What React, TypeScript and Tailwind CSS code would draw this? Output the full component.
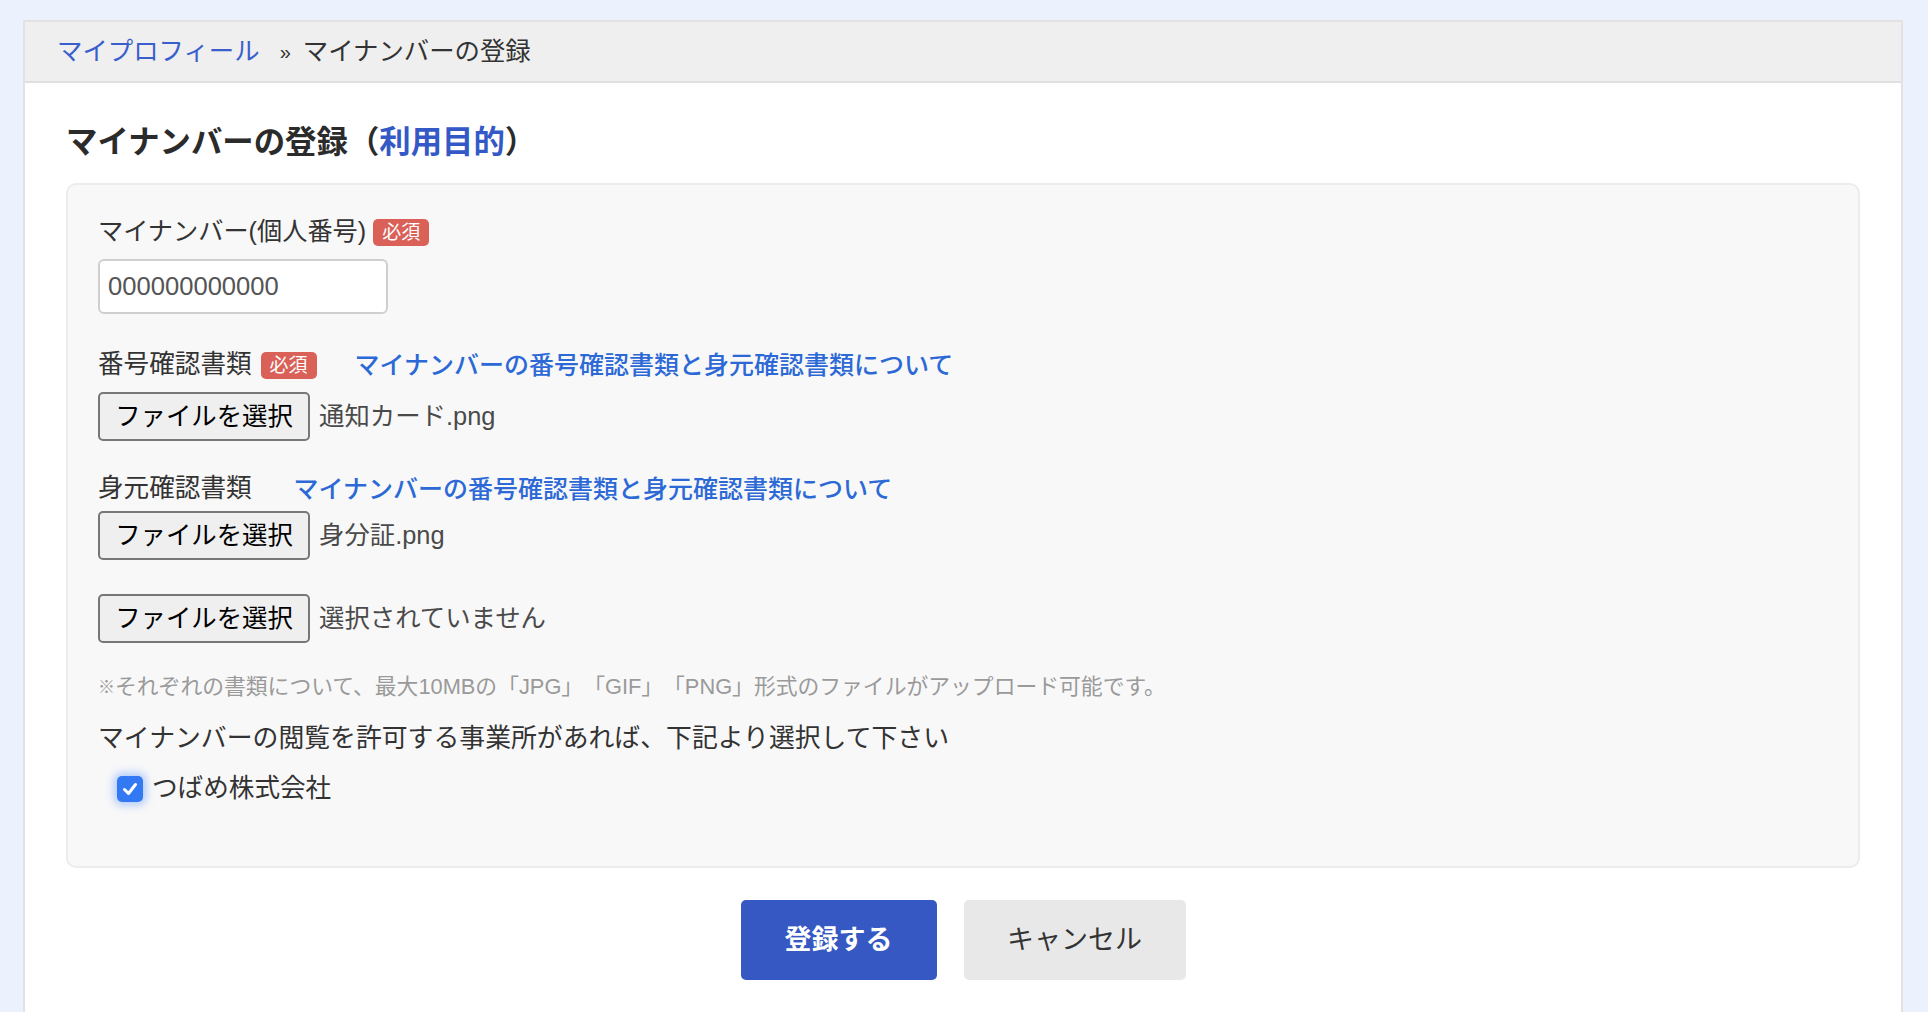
import React from "react";

function Badge() {
  return (
    <span className="inline-flex h-[27px] items-center rounded-[5px] bg-[#da6158] px-[9px] text-[19px] leading-none text-white">
      必須
    </span>
  );
}

function FileRow({ name }: { name: string }) {
  return (
    <div className="flex h-[49px] items-center">
      <span className="flex h-[49px] w-[212px] items-center justify-center rounded-[5px] border-2 border-[#777777] bg-[#efefef] text-[25.4px] leading-none text-black">
        ファイルを選択
      </span>
      <span className="ml-[9px] text-[25.4px] leading-none text-[#4a4a4a]">{name}</span>
    </div>
  );
}

export default function App() {
  return (
    <div className="min-h-[1012px] w-full bg-[#ebf2fd] pt-[20px] font-['Liberation_Sans','Noto_Sans_CJK_JP',sans-serif] text-[#333333] [text-spacing-trim:space-all]">
      <div className="ml-[23px] w-[1880px] min-h-[992px] border-x-2 border-t-2 border-[#e2e2e2] bg-white">
        {/* header */}
        <div className="flex h-[61px] items-center border-b-2 border-[#e0e0e0] bg-[#efefef] pl-[32px] text-[25.4px] leading-none">
          <span className="text-[#3a5fcd]">マイプロフィール</span>
          <span className="ml-[20px] text-[20px] text-[#333]">»</span>
          <span className="ml-[12px] text-[#333]">マイナンバーの登録</span>
        </div>

        {/* body */}
        <div className="px-[41px] pt-[37px]">
          <h1 className="h-[46px] text-[31.4px] font-bold leading-[46px] text-[#2b2b2b]">
            マイナンバーの登録（<span className="text-[#3459c6]">利用目的</span>）
          </h1>

          <div className="mt-[17px] rounded-[10px] border-2 border-[#ececec] bg-[#f8f8f8] pl-[30px] pt-[29px] pb-[59px]">
            {/* my number */}
            <div className="flex h-[36px] items-center text-[25.2px] leading-none">
              <span>マイナンバー(個人番号)</span>
              <span className="ml-[7px]">
                <Badge />
              </span>
            </div>
            <div className="mt-[9px] flex h-[55px] w-[290px] items-center rounded-[6px] border-2 border-[#cfcfcf] bg-white pl-[8px] text-[25.6px] leading-none text-[#555555]">
              000000000000
            </div>

            {/* number doc */}
            <div className="mt-[33px] flex h-[36px] items-center text-[25.6px] leading-none">
              <span>番号確認書類</span>
              <span className="ml-[9px]">
                <Badge />
              </span>
              <span className="ml-[38px] text-[25px] font-medium text-[#2c69d6]">
                マイナンバーの番号確認書類と身元確認書類について
              </span>
            </div>
            <div className="mt-[9px]">
              <FileRow name="通知カード.png" />
            </div>

            {/* identity doc */}
            <div className="mt-[30px] flex h-[36px] items-center text-[25.6px] leading-none">
              <span>身元確認書類</span>
              <span className="ml-[42px] text-[25px] font-medium text-[#2c69d6]">
                マイナンバーの番号確認書類と身元確認書類について
              </span>
            </div>
            <div className="mt-[4px]">
              <FileRow name="身分証.png" />
            </div>
            <div className="mt-[34px]">
              <FileRow name="選択されていません" />
            </div>

            <div className="mt-[29px] flex h-[30px] items-center text-[21.8px] leading-none text-[#9a9a9a]">
              <span className="text-[17px]">※</span>それぞれの書類について、最大10MBの「JPG」「GIF」「PNG」形式のファイルがアップロード可能です。
            </div>

            <div className="mt-[19px] flex h-[36px] items-center text-[25.85px] leading-none">
              マイナンバーの閲覧を許可する事業所があれば、下記より選択して下さい
            </div>

            <div className="mt-[14px] flex h-[36px] items-center pl-[19px] text-[25.6px] leading-none">
              <span className="flex h-[26px] w-[26px] items-center justify-center rounded-[5px] bg-[#3479f4] shadow-[0_0_8px_3px_rgba(80,140,255,0.45)]">
                <svg width="18" height="18" viewBox="0 0 18 18" fill="none">
                  <path d="M3.5 9.5 L7.5 13.5 L14.5 4.5" stroke="white" strokeWidth="3" strokeLinecap="round" strokeLinejoin="round" />
                </svg>
              </span>
              <span className="ml-[9px]">つばめ株式会社</span>
            </div>
          </div>

          {/* buttons */}
          <div className="mt-[32px] flex justify-center gap-[27px]">
            <span className="flex h-[80px] w-[196px] items-center justify-center rounded-[5px] bg-[#3558c2] text-[27px] font-bold leading-none text-white">
              登録する
            </span>
            <span className="flex h-[80px] w-[222px] items-center justify-center rounded-[5px] bg-[#e8e8e8] text-[27px] leading-none text-[#333]">
              キャンセル
            </span>
          </div>
        </div>
      </div>
    </div>
  );
}
